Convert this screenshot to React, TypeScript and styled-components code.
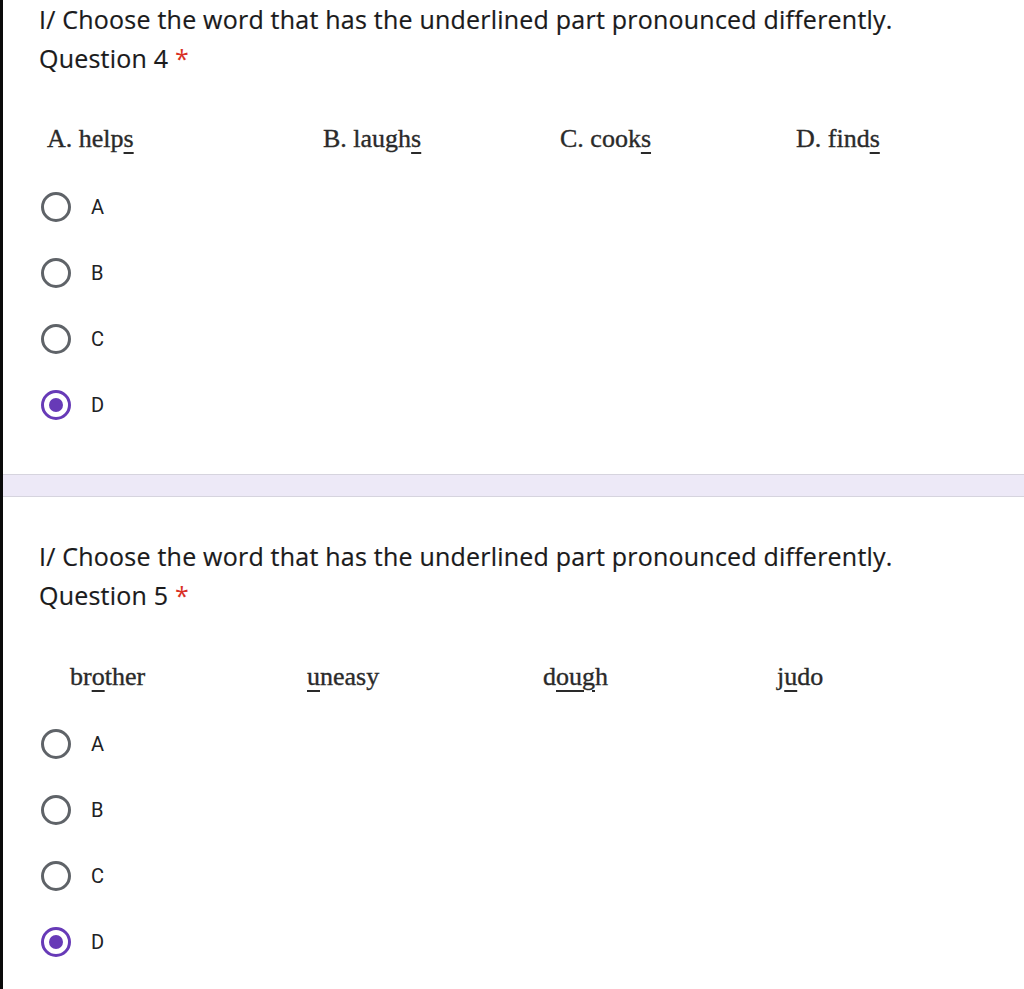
import * as React from 'react';
import styled, { createGlobalStyle } from 'styled-components';

const Global = createGlobalStyle`
  html, body {
    margin: 0;
    padding: 0;
    background: #ffffff;
  }
  body {
    font-family: Roboto, "Liberation Sans", Arial, sans-serif;
  }
`;

type Word = { text: string; mark: [number, number] };

type Question = {
  number: number;
  words: Word[];
  columns: string;
  indent: number;
  selected: string;
};

const questions: Question[] = [
  {
    number: 4,
    words: [
      { text: 'A. helps', mark: [7, 8] },
      { text: 'B. laughs', mark: [8, 9] },
      { text: 'C. cooks', mark: [7, 8] },
      { text: 'D. finds', mark: [7, 8] },
    ],
    columns: '276px 237px 236px auto',
    indent: 47,
    selected: 'D',
  },
  {
    number: 5,
    words: [
      { text: 'brother', mark: [2, 3] },
      { text: 'uneasy', mark: [0, 1] },
      { text: 'dough', mark: [1, 4] },
      { text: 'judo', mark: [1, 2] },
    ],
    columns: '237px 236px 234px auto',
    indent: 70,
    selected: 'D',
  },
];

export default function App() {
  return (
    <Page>
      <Global />
      {questions.map((q, i) => (
        <React.Fragment key={q.number}>
          {i > 0 && <Band />}
          <QuestionCard q={q} first={i === 0} />
        </React.Fragment>
      ))}
    </Page>
  );
}

function QuestionCard({ q, first }: { q: Question; first: boolean }) {
  return (
    <Card $first={first}>
      <Title>I/ Choose the word that has the underlined part pronounced differently.</Title>
      <Title>
        Question {q.number} <Star>*</Star>
      </Title>
      <WordRow $columns={q.columns} $indent={q.indent} $first={first}>
        {q.words.map((w) => (
          <WordCell key={w.text}>
            {w.text.slice(0, w.mark[0])}
            <Mark>{w.text.slice(w.mark[0], w.mark[1])}</Mark>
            {w.text.slice(w.mark[1])}
          </WordCell>
        ))}
      </WordRow>
      <Options>
        {['A', 'B', 'C', 'D'].map((opt) => (
          <OptionRow key={opt}>
            <Radio $checked={opt === q.selected} />
            <OptionLabel>{opt}</OptionLabel>
          </OptionRow>
        ))}
      </Options>
    </Card>
  );
}

const Page = styled.div`
  border-left: 3px solid #0a0a0a;
  min-height: 989px;
  box-sizing: border-box;
  overflow: hidden;
`;

const Card = styled.section<{ $first: boolean }>`
  padding: ${(p) => (p.$first ? '0' : '40px')} 0 36px 36px;
`;

const Title = styled.div`
  font-family: "Open Sans", Roboto, sans-serif;
  font-size: 25px;
  line-height: 39px;
  color: #1a1a1b;
  white-space: nowrap;
  letter-spacing: 0.22px;
  -webkit-text-stroke: 0.2px #1a1a1b;
`;

const Star = styled.span`
  color: #d93025;
  -webkit-text-stroke: 0;
`;

const WordRow = styled.div<{ $columns: string; $indent: number; $first: boolean }>`
  display: grid;
  grid-template-columns: ${(p) => p.$columns};
  margin: ${(p) => (p.$first ? '41px' : '42px')} 0 ${(p) => (p.$first ? '15px' : '14px')}
    ${(p) => p.$indent - 39}px;
  font-family: "Liberation Serif", "Times New Roman", serif;
  font-size: 26px;
  line-height: 40px;
  color: #2a2a2a;
  -webkit-text-stroke: 0.35px #2a2a2a;
`;

const WordCell = styled.div`
  white-space: nowrap;
`;

const Mark = styled.span`
  text-decoration: underline;
  text-decoration-thickness: 2px;
  text-underline-offset: 5px;
`;

const Options = styled.div`
  display: flex;
  flex-direction: column;
`;

const OptionRow = styled.div`
  display: flex;
  align-items: center;
  height: 66px;
  gap: 20px;
  padding-left: 2px;
`;

const Radio = styled.span<{ $checked: boolean }>`
  width: 30px;
  height: 30px;
  box-sizing: border-box;
  border-radius: 50%;
  border: 3px solid ${(p) => (p.$checked ? '#673ab7' : '#5f6368')};
  display: flex;
  align-items: center;
  justify-content: center;
  &::after {
    content: '';
    width: 14px;
    height: 14px;
    border-radius: 50%;
    background: #673ab7;
    display: ${(p) => (p.$checked ? 'block' : 'none')};
  }
`;

const OptionLabel = styled.span`
  font-size: 20px;
  color: #202124;
`;

const Band = styled.div`
  height: 21px;
  background: #ede9f7;
  border-top: 1px solid #d6d4de;
  border-bottom: 1px solid #d6d4de;
`;
